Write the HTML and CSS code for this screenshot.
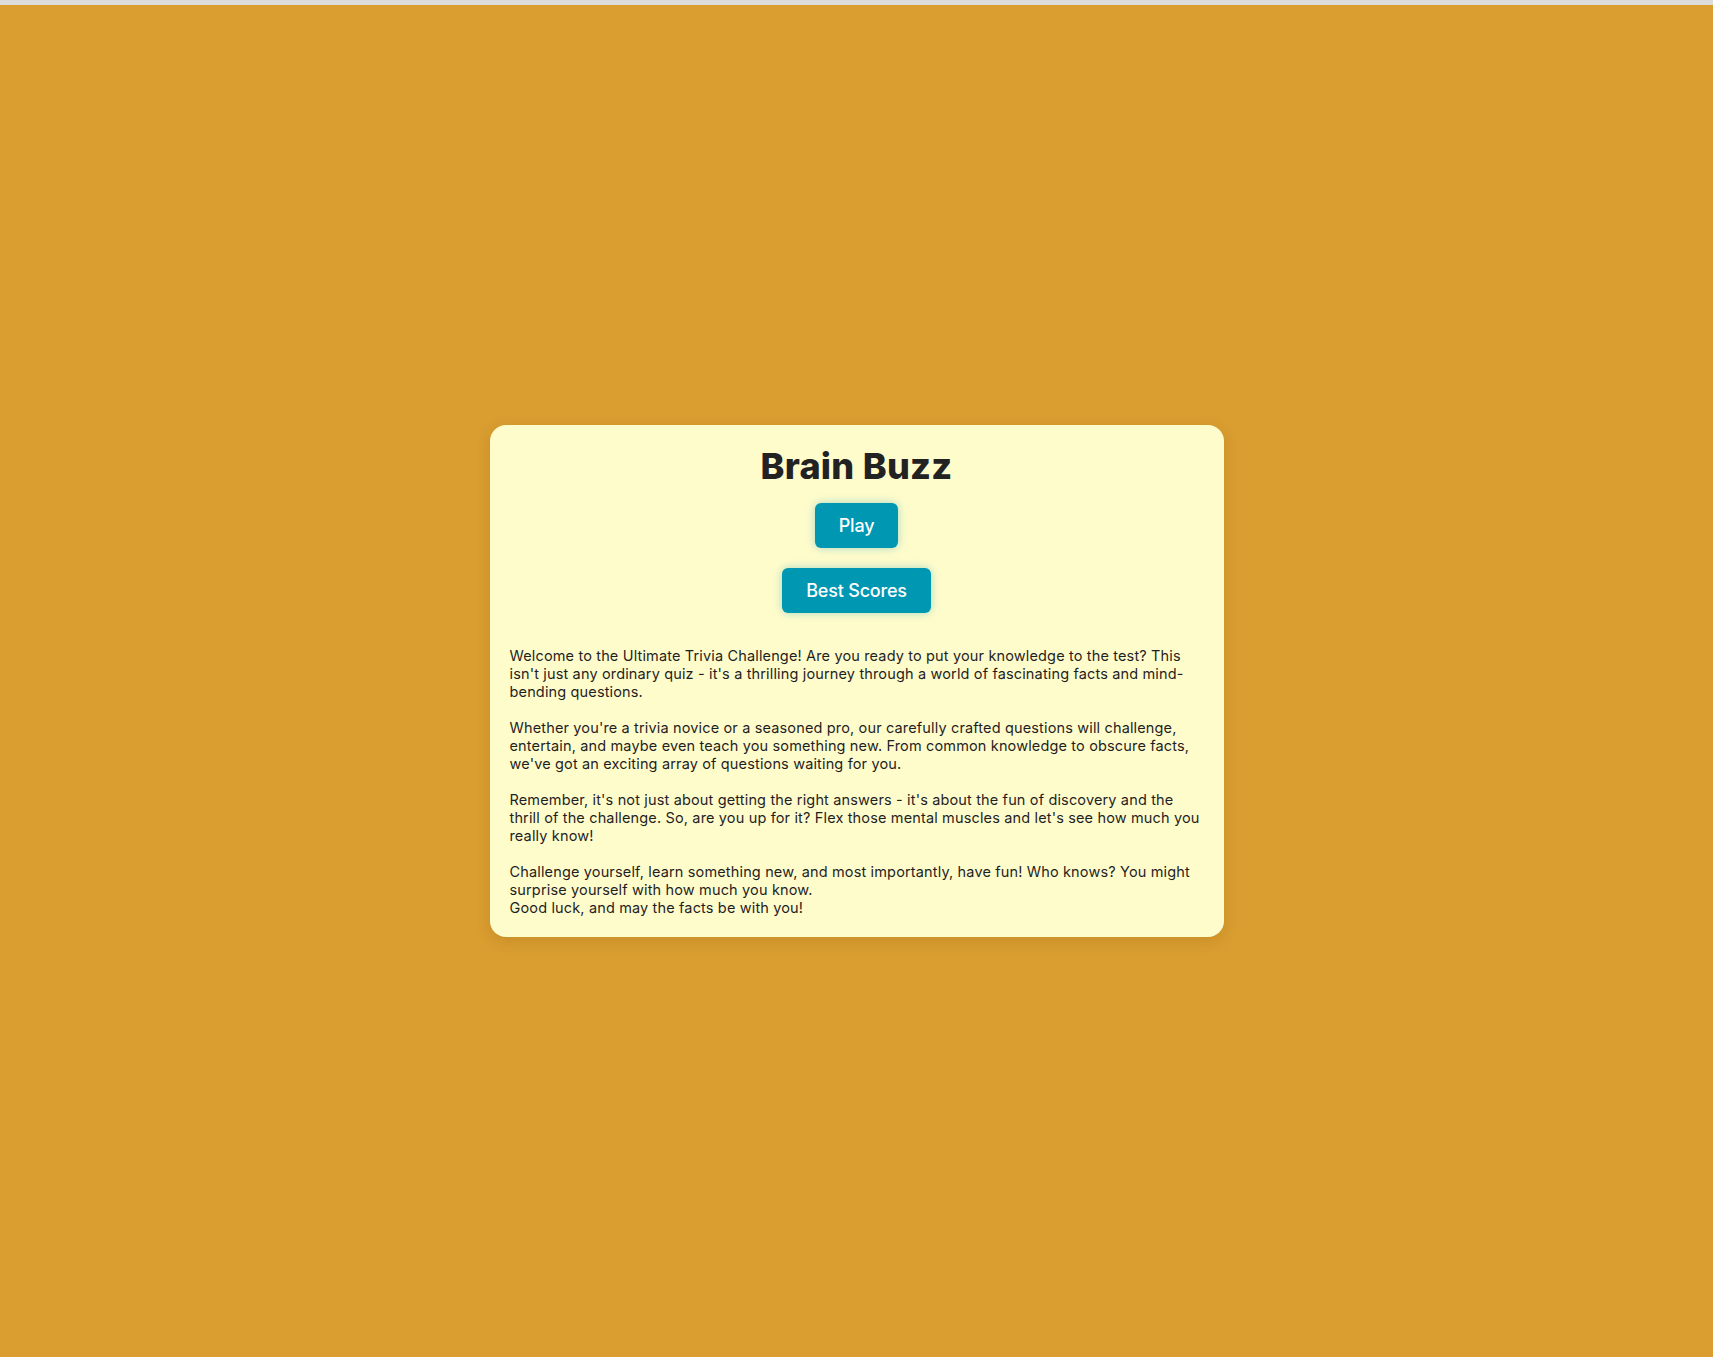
FILE: index.html
```html
<!DOCTYPE html>
<html lang="en">
<head>
<meta charset="utf-8">
<title>Brain Buzz</title>
<link rel="stylesheet" href="styles.css">
</head>
<body>
<main class="card">
  <h1 class="title">Brain Buzz</h1>
  <div class="actions">
    <button class="btn">Play</button>
    <button class="btn">Best Scores</button>
  </div>
  <div class="intro">
    <p>Welcome to the Ultimate Trivia Challenge! Are you ready to put your knowledge to the test? This isn't just any ordinary quiz - it's a thrilling journey through a world of fascinating facts and mind-bending questions.</p>
    <p>Whether you're a trivia novice or a seasoned pro, our carefully crafted questions will challenge, entertain, and maybe even teach you something new. From common knowledge to obscure facts, we've got an exciting array of questions waiting for you.</p>
    <p>Remember, it's not just about getting the right answers - it's about the fun of discovery and the thrill of the challenge. So, are you up for it? Flex those mental muscles and let's see how much you really know!</p>
    <p>Challenge yourself, learn something new, and most importantly, have fun! Who knows? You might surprise yourself with how much you know.<br>Good luck, and may the facts be with you!</p>
  </div>
</main>
</body>
</html>
```
FILE: styles.css
```css
* { box-sizing: border-box; }
html, body { margin: 0; padding: 0; }
body {
  min-height: 100vh;
  border-top: 5px solid #dcdcdc;
  background: #d99d30;
  display: flex;
  align-items: center;
  justify-content: center;
  font-family: Inter, "Noto Sans", sans-serif;
  color: #222;
}
.card {
  width: 734px;
  background: #fffccc;
  border-radius: 16px;
  padding: 20px;
  box-shadow: 0 4px 14px rgba(120, 70, 0, 0.18);
}
.title {
  margin: 0 0 16px;
  text-align: center;
  font-size: 36px;
  font-weight: 800;
  letter-spacing: 0.3px;
  line-height: 42px;
  color: #222;
}
.actions {
  display: flex;
  flex-direction: column;
  align-items: center;
  gap: 20px;
}
.btn {
  font-family: Inter, "Noto Sans", sans-serif;
  font-size: 18px;
  line-height: 21px;
  font-weight: 500;
  letter-spacing: -0.2px;
  color: #fff;
  background: #0097b2;
  border: none;
  border-radius: 6px;
  padding: 12px 24px;
  box-shadow: 0 0 10px rgba(0, 151, 178, 0.35);
  cursor: pointer;
}
.intro {
  margin-top: 34px;
  font-size: 14.5px;
  letter-spacing: 0.15px;
  line-height: 18px;
  color: #1f1f1f;
}
.intro p { margin: 0 0 18px; }
.intro p:last-child { margin-bottom: 0; }
```
